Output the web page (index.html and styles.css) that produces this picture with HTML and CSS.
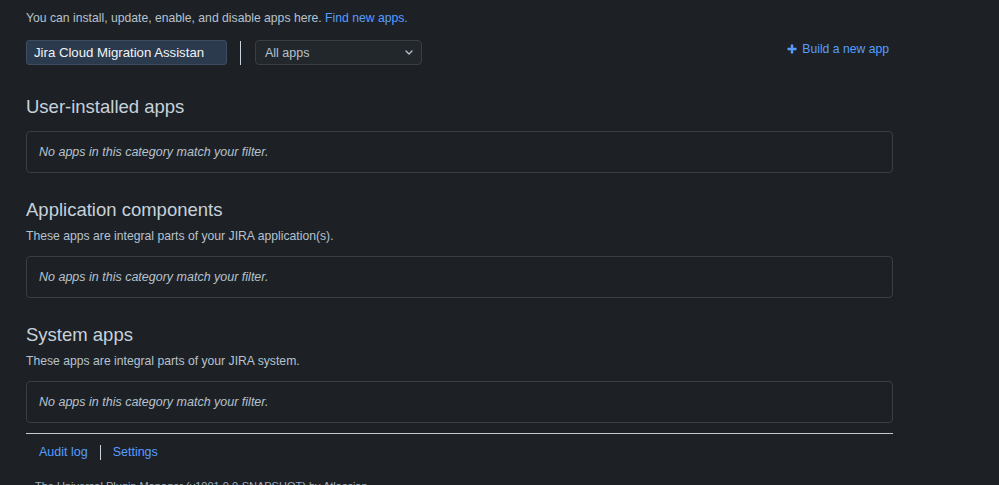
FILE: index.html
```html
<!DOCTYPE html>
<html lang="en">
<head>
    <meta charset="UTF-8">
    <title>Manage apps</title>
    <link rel="stylesheet" href="styles.css">
</head>
<body>
    <div class="page">
        <p class="intro">You can install, update, enable, and disable apps here. <a href="#">Find new apps.</a></p>

        <div class="toolbar">
            <input class="search" type="text" value="Jira Cloud Migration Assistant">
            <span class="divider"></span>
            <div class="select">
                <span>All apps</span>
                <svg width="8" height="5" viewBox="0 0 8 5"><path d="M1 1l3 3 3-3" fill="none" stroke="#b6c2cf" stroke-width="1.3" stroke-linecap="round" stroke-linejoin="round"/></svg>
            </div>
            <a class="build" href="#">
                <svg width="10" height="10" viewBox="0 0 10 10"><path d="M5 0.5v9M0.5 5h9" stroke="#579dff" stroke-width="2.4"/></svg>
                Build a new app
            </a>
        </div>

        <!-- User-installed -->
        <div class="section first">
            <h2>User-installed apps</h2>
            <div class="empty">No apps in this category match your filter.</div>
        </div>

        <!-- Application components -->
        <div class="section">
            <h2>Application components</h2>
            <p class="desc">These apps are integral parts of your JIRA application(s).</p>
            <div class="empty">No apps in this category match your filter.</div>
        </div>

        <!-- System apps -->
        <div class="section">
            <h2>System apps</h2>
            <p class="desc">These apps are integral parts of your JIRA system.</p>
            <div class="empty">No apps in this category match your filter.</div>
        </div>

        <div class="footer">
            <a href="#">Audit log</a>
            <span class="sep"></span>
            <a href="#">Settings</a>
        </div>
        <p class="version">The Universal Plugin Manager (v1001.0.0-SNAPSHOT) by Atlassian</p>
    </div>
</body>
</html>
```

FILE: styles.css
```css
* {
    margin: 0;
    padding: 0;
    box-sizing: border-box;
}

body {
    background-color: #1d2125;
    color: #b6c2cf;
    font-family: 'Liberation Sans', Arial, sans-serif;
    font-size: 12.2px;
}

a {
    color: #579dff;
    text-decoration: none;
}

.page {
    width: 867px;
    margin-left: 26px;
    padding-top: 8px;
}

.intro {
    line-height: 20px;
}

.toolbar {
    display: flex;
    align-items: center;
    margin-top: 12px;
    height: 25px;
}

.search {
    width: 201px;
    height: 25px;
    background-color: #2c3a4e;
    border: 1px solid #3d4d63;
    border-radius: 3px;
    color: #f1f4f7;
    font-family: inherit;
    font-size: 13.2px;
    padding: 0 22px 0 7px;
    outline: none;
}

.divider {
    width: 1px;
    height: 24px;
    background-color: #c7d1db;
    margin: 0 14px 0 13px;
}

.select {
    width: 167px;
    height: 25px;
    display: flex;
    align-items: center;
    justify-content: space-between;
    padding: 0 8px 0 9px;
    background-color: #22272b;
    border: 1px solid #383e45;
    border-radius: 4px;
    font-size: 12.5px;
}

.build {
    margin-left: auto;
    margin-right: 4px;
    margin-top: -8px;
    display: flex;
    align-items: center;
    gap: 5px;
}

.section {
    margin-top: 25px;
}

.section.first {
    margin-top: 30px;
}

h2 {
    font-size: 18.5px;
    font-weight: normal;
    line-height: 24px;
    color: #c7d1db;
}

.desc {
    margin-top: 5px;
    line-height: 18px;
}

.empty {
    margin-top: 12px;
    height: 42px;
    border: 1px solid #383e45;
    border-radius: 4px;
    padding-left: 12px;
    display: flex;
    align-items: center;
    font-style: italic;
    font-size: 12.5px;
}

.desc + .empty {
    margin-top: 11px;
}

.footer {
    margin-top: 10px;
    border-top: 1px solid #c7cbd1;
    padding: 10px 0 0 13px;
    display: flex;
    align-items: center;
    font-size: 12.5px;
    line-height: 16px;
}

.sep {
    width: 1px;
    height: 15px;
    background-color: #c7d1db;
    margin: 0 12px;
}

.version {
    margin-top: 20px;
    padding-left: 9px;
    font-size: 11px;
    color: #9fadbc;
}
```
